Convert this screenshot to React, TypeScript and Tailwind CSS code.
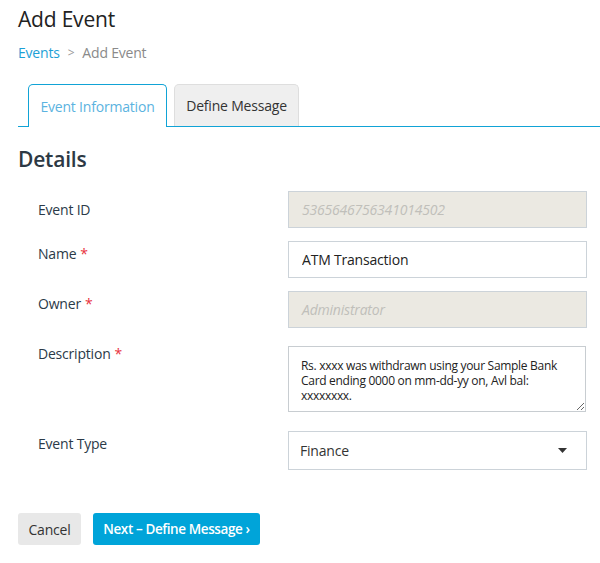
import { useState } from "react";

const font = { fontFamily: '"Open Sans", "Noto Sans", sans-serif' };

function Label({ text, required }: { text: string; required?: boolean }) {
  return (
    <div className="w-[270px] pl-5 text-[14px] leading-[20px] text-[#2b3a48]">
      {text}
      {required && <span className="ml-1 text-[#e8323c]">*</span>}
    </div>
  );
}

export default function App() {
  const [name, setName] = useState("ATM Transaction");
  const [desc, setDesc] = useState(
    "Rs. xxxx was withdrawn using your Sample Bank Card ending 0000 on mm-dd-yy on, Avl bal: xxxxxxxx."
  );

  return (
    <div className="min-h-[563px] bg-white pl-[18px] tracking-[-0.2px]" style={font}>
      <h1 className="pt-[5px] text-[21px] leading-[28px] text-[#222]">Add Event</h1>

      <div className="mt-[10px] flex items-center text-[14px] leading-[20px]">
        <span className="text-[#1d9fd6]">Events</span>
        <span className="mx-[8px] text-[12px] text-[#999]">&gt;</span>
        <span className="text-[#8a8a8a]">Add Event</span>
      </div>

      {/* tabs */}
      <div className="mt-[21px] flex items-end border-b border-[#11a3d6] pl-[10px]">
        <div className="-mb-px flex h-[43px] w-[139px] items-center justify-center rounded-t-[5px] border border-b-0 border-[#11a3d6] bg-white text-[14px] text-[#5bb3e0]">
          Event Information
        </div>
        <div className="ml-[7px] flex h-[42px] w-[125px] items-center justify-center rounded-t-[5px] border border-b-0 border-[#dedede] bg-[#efefef] text-[14px] text-[#333]">
          Define Message
        </div>
      </div>

      <h2 className="mt-[18px] text-[21px] font-semibold leading-[28px] text-[#2d3944]">Details</h2>

      <div className="mt-[18px] flex flex-col">
        <div className="flex items-center">
          <Label text="Event ID" />
          <div className="flex h-[37px] w-[299px] items-center border border-[#ccd3d9] bg-[#ebe9e2] px-[13px] text-[14px] italic text-[#c0bfba]">
            5365646756341014502
          </div>
        </div>

        <div className="mt-[13px] flex items-start">
          <div className="pt-[3px]">
            <Label text="Name" required />
          </div>
          <input
            value={name}
            onChange={(e) => setName(e.target.value)}
            className="h-[37px] w-[299px] border border-[#ccd3d9] bg-white px-[13px] text-[14px] text-[#222] outline-none"
          />
        </div>

        <div className="mt-[13px] flex items-start">
          <div className="pt-[3px]">
            <Label text="Owner" required />
          </div>
          <div className="flex h-[37px] w-[299px] items-center border border-[#ccd3d9] bg-[#ebe9e2] px-[13px] text-[14px] italic text-[#c0bfba]">
            Administrator
          </div>
        </div>

        <div className="mt-[18px] flex items-start">
          <div className="-mt-[2px]">
            <Label text="Description" required />
          </div>
          <textarea
            value={desc}
            onChange={(e) => setDesc(e.target.value)}
            className="h-[66px] w-[298px] resize-y border border-[#c8cdd1] bg-white px-[12px] pt-[11px] pb-0 text-[12px] leading-[15px] tracking-[-0.3px] text-[#222] outline-none"
          />
        </div>

        <div className="mt-[19px] flex items-start">
          <div className="pt-[3px]">
            <Label text="Event Type" />
          </div>
          <div className="flex h-[39px] w-[299px] items-center justify-between border border-[#ccd3d9] bg-white pl-[11px] pr-[19px] text-[14px] text-[#333]">
            <span>Finance</span>
            <svg width="9" height="5" viewBox="0 0 9 5">
              <path d="M0 0h9L4.5 5z" fill="#333" />
            </svg>
          </div>
        </div>
      </div>

      <div className="mt-[43px] flex gap-[12px]">
        <button className="h-[32px] w-[63px] rounded-[3px] bg-[#e8e8e8] text-[14px] text-[#333]">Cancel</button>
        <button className="flex h-[32px] w-[167px] items-center justify-center rounded-[3px] bg-[#00a4d9] text-[13.5px] font-semibold tracking-[-0.4px] text-white">
          Next – Define Message ›
        </button>
      </div>
    </div>
  );
}
